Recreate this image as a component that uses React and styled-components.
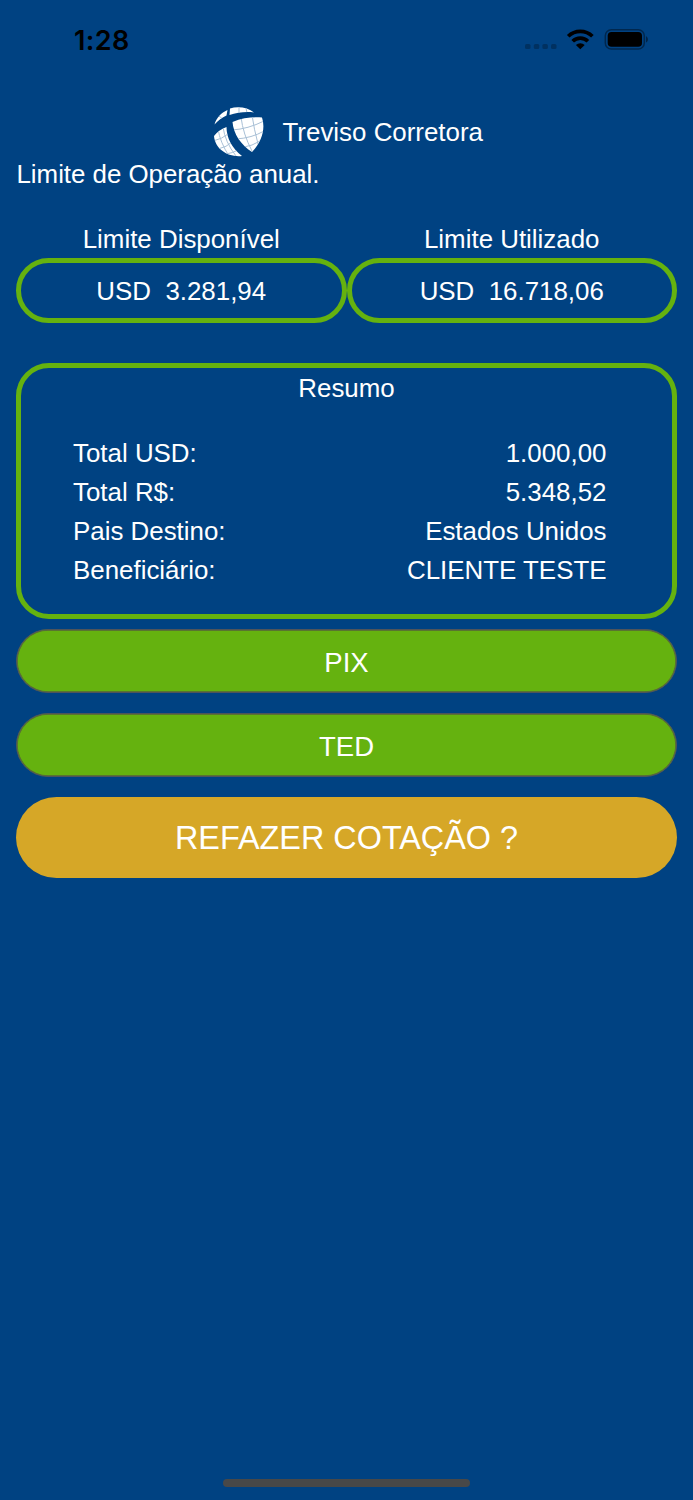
import React from 'react';
import styled, { createGlobalStyle } from 'styled-components';

const GlobalStyle = createGlobalStyle`
  * { box-sizing: border-box; }
  body { margin: 0; background: #004282; }
  button { font: inherit; }
`;

const Screen = styled.div`
  display: flex;
  flex-direction: column;
  width: 693px;
  height: 1500px;
  background: #004282;
  color: #fff;
  font-family: 'Liberation Sans', Arial, sans-serif;
  font-size: 25.9px;
  line-height: 30px;
  overflow: hidden;
`;

const StatusBar = styled.header`
  display: flex;
  justify-content: space-between;
  align-items: flex-start;
  height: 104px;
  padding: 25px 44px 0 74px;
  color: #000;
`;

const Clock = styled.time`
  padding-top: 1px;
  font-family: Inter, sans-serif;
  font-size: 27px;
  font-weight: 600;
  letter-spacing: 0.35px;
`;

const StatusIcons = styled.svg`
  width: 124px;
  height: 30px;
`;

const Content = styled.main`
  display: flex;
  flex-direction: column;
  flex: 1;
  padding: 0 16px;
`;

const Brand = styled.div`
  display: flex;
  justify-content: center;
  align-items: center;
  gap: 14.5px;
  height: 56px;
`;

const Logo = styled.svg`
  width: 58px;
  height: 56px;
`;

const Text = styled.span`
  white-space: pre;
`;

const BrandName = styled(Text)`
  padding-bottom: 1px;
`;

const Intro = styled.p`
  margin: -1px 0 0;
  height: 63px;
  padding-left: 0.5px;
  letter-spacing: -0.03px;
`;

const Limits = styled.section`
  display: flex;
`;

const Limit = styled.div`
  display: flex;
  flex: 1;
  flex-direction: column;
  align-items: center;
  line-height: 34px;
`;

const LimitLabel = styled(Text)`
  height: 36px;
`;

const LimitValue = styled.div`
  display: flex;
  justify-content: center;
  align-items: center;
  width: 100%;
  height: 65px;
  padding-top: 1px;
  border: 5px solid #65b20f;
  border-radius: 33px;
`;

const Summary = styled.section`
  height: 256px;
  margin-top: 40px;
  padding: 5px 65.5px 0 52px;
  border: 5px solid #65b20f;
  border-radius: 33px;
`;

const SummaryTitle = styled.h2`
  margin: 0 -13.5px 31px 0;
  font-size: inherit;
  font-weight: 400;
  line-height: 30px;
  text-align: center;
`;

const SummaryRow = styled.div`
  display: flex;
  justify-content: space-between;
  height: 38.9px;
  line-height: 38.9px;
`;

const Actions = styled.div`
  display: flex;
  flex-direction: column;
  gap: 20px;
  margin-top: 10px;
`;

const PayButton = styled.button`
  height: 64px;
  padding: 3px 0 0;
  border: 1px solid #50545a;
  border-radius: 32px;
  background: #65b20f;
  box-shadow: inset 0 0 0 0.7px #55603c;
  color: #fff;
  font-size: 27.5px;
`;

const RetryButton = styled.button`
  height: 81px;
  padding: 1px 0 0;
  border: 0;
  border-radius: 41px;
  background: #d6a727;
  color: #fff;
  font-size: 32.4px;
`;

const HomeBar = styled.footer`
  align-self: center;
  width: 247px;
  height: 8px;
  margin-bottom: 13px;
  border-radius: 4px;
  background: #484848;
`;

const rows = [
  ['Total USD:', '1.000,00'],
  ['Total R$:', '5.348,52'],
  ['Pais Destino:', 'Estados Unidos'],
  ['Beneficiário:', 'CLIENTE TESTE'],
];

function DeviceStatus() {
  return (
    <StatusIcons viewBox="525 25 124 30">
      <g fill="#000" fillOpacity=".25">
        <rect x="525" y="44" width="5.5" height="5" rx="1.5" />
        <rect x="533.8" y="44" width="5.5" height="5" rx="1.5" />
        <rect x="542.4" y="44" width="5.5" height="5" rx="1.5" />
        <rect x="551" y="44" width="5.5" height="5" rx="1.5" />
      </g>
      <g fill="none" stroke="#000" strokeWidth="3.7">
        <path d="M568.2 36.3a17.2 17.2 0 0 1 24.2 0" />
        <path d="M572.7 41.3a10.8 10.8 0 0 1 15.2 0" />
      </g>
      <path d="M580.3 49.3l-4.4-4.4a6.6 6.6 0 0 1 8.8 0z" fill="#000" />
      <rect x="605.3" y="29.8" width="39" height="19.2" rx="6" fill="none" stroke="#000" strokeOpacity=".4" strokeWidth="1.5" />
      <rect x="607.7" y="32" width="34.3" height="14.8" rx="3.8" fill="#000" />
      <path d="M646 36.3c2.6.8 2.6 5.5 0 6.3z" fill="#000" fillOpacity=".45" />
    </StatusIcons>
  );
}

function Globe() {
  return (
    <Logo viewBox="0 0 58 56">
      <defs>
        <clipPath id="land">
          <path d="M4.5 20.5C6.5 13.5 11 9 17.5 6L16.5 11.5C12 13.5 8 16.5 4.5 20.5Z M20 4.5C28 2 38 3.5 44 8.5C36 7.5 27 8.5 19.5 11Z M22.5 18C32 14 42 12.8 52 13.5C55.5 24 52.5 37 42 48C31 41 23.5 30 22.5 18Z M4 32C7 28 11 25 16.5 23C16.5 34 22 44 32 52C18 53.5 5 45 4 32Z" />
        </clipPath>
        <filter id="soften"><feGaussianBlur stdDeviation="0.6" /></filter>
      </defs>
      <g filter="url(#soften)">
        <g clipPath="url(#land)">
          <rect width="58" height="56" fill="#fff" />
          <g fill="none" stroke="#a9c0d6" strokeWidth="1">
            <path d="M22 26Q38 25 54 17M26 35Q42 34 54 27M34 43Q42 42 50 37M3 37Q12 35 18 30M8 45Q17 43 22 38M16 50Q23 49 28 46" />
            <path d="M31 13Q33 30 42 47M42 11Q44 25 48 40M8 25Q10 38 19 52M13 23Q15 38 26 52M9 12L14 16M29 4L29 10M36 4L37 9" />
          </g>
        </g>
      </g>
    </Logo>
  );
}

export default function App() {
  return (
    <>
      <GlobalStyle />
      <Screen>
        <StatusBar>
          <Clock>1:28</Clock>
          <DeviceStatus />
        </StatusBar>
        <Content>
          <Brand>
            <Globe />
            <BrandName>Treviso Corretora</BrandName>
          </Brand>
          <Intro><Text>Limite de Operação anual.</Text></Intro>
          <Limits>
            <Limit>
              <LimitLabel>Limite Disponível</LimitLabel>
              <LimitValue><Text>{'USD  3.281,94'}</Text></LimitValue>
            </Limit>
            <Limit>
              <LimitLabel>Limite Utilizado</LimitLabel>
              <LimitValue><Text>{'USD  16.718,06'}</Text></LimitValue>
            </Limit>
          </Limits>
          <Summary>
            <SummaryTitle>Resumo</SummaryTitle>
            {rows.map(([label, value]) => (
              <SummaryRow key={label}>
                <Text>{label}</Text>
                <Text>{value}</Text>
              </SummaryRow>
            ))}
          </Summary>
          <Actions>
            <PayButton>PIX</PayButton>
            <PayButton>TED</PayButton>
            <RetryButton>REFAZER COTAÇÃO ?</RetryButton>
          </Actions>
        </Content>
        <HomeBar />
      </Screen>
    </>
  );
}
